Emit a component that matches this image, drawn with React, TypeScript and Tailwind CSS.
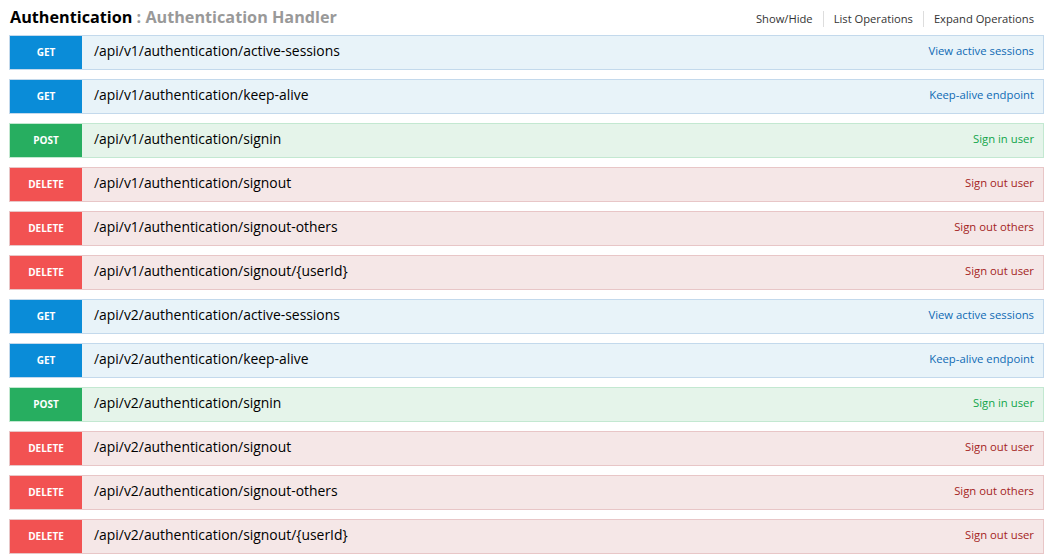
import React from "react";

type Op = {
  method: "GET" | "POST" | "DELETE";
  path: string;
  summary: string;
};

const ops: Op[] = [
  { method: "GET", path: "/api/v1/authentication/active-sessions", summary: "View active sessions" },
  { method: "GET", path: "/api/v1/authentication/keep-alive", summary: "Keep-alive endpoint" },
  { method: "POST", path: "/api/v1/authentication/signin", summary: "Sign in user" },
  { method: "DELETE", path: "/api/v1/authentication/signout", summary: "Sign out user" },
  { method: "DELETE", path: "/api/v1/authentication/signout-others", summary: "Sign out others" },
  { method: "DELETE", path: "/api/v1/authentication/signout/{userId}", summary: "Sign out user" },
  { method: "GET", path: "/api/v2/authentication/active-sessions", summary: "View active sessions" },
  { method: "GET", path: "/api/v2/authentication/keep-alive", summary: "Keep-alive endpoint" },
  { method: "POST", path: "/api/v2/authentication/signin", summary: "Sign in user" },
  { method: "DELETE", path: "/api/v2/authentication/signout", summary: "Sign out user" },
  { method: "DELETE", path: "/api/v2/authentication/signout-others", summary: "Sign out others" },
  { method: "DELETE", path: "/api/v2/authentication/signout/{userId}", summary: "Sign out user" },
];

const styles = {
  GET: {
    row: "bg-[#e8f3f9] border-[#c3d9ec]",
    badge: "bg-[#0a8cd8]",
    summary: "text-[#0f6ab4]",
  },
  POST: {
    row: "bg-[#e5f4ea] border-[#c3e8d1]",
    badge: "bg-[#27ae60]",
    summary: "text-[#10a54a]",
  },
  DELETE: {
    row: "bg-[#f5e7e7] border-[#e8c6c7]",
    badge: "bg-[#f25252]",
    summary: "text-[#a41e22]",
  },
};

function OperationRow({ op }: { op: Op }) {
  const s = styles[op.method];
  return (
    <li className={`flex h-[35px] items-stretch border ${s.row}`}>
      <span
        className={`flex w-[72px] shrink-0 items-center justify-center text-[10px] font-bold text-white ${s.badge}`}
      >
        {op.method}
      </span>
      <span className="flex flex-1 items-center pb-[3px] pl-3 text-[13.9px] text-black">
        {op.path}
      </span>
      <span className={`flex items-center pb-[2px] pr-[9px] text-[11.3px] ${s.summary}`}>
        {op.summary}
      </span>
    </li>
  );
}

export default function App() {
  return (
    <div
      className="min-h-screen bg-white pl-[9px] pr-[11px]"
      style={{ fontFamily: '"Open Sans", "Noto Sans", sans-serif' }}
    >
      <div className="flex h-[35px] items-center justify-between">
        <h2 className="pl-px text-[16.2px] font-bold text-black">
          Authentication
          <span className="text-[#999]"> : Authentication Handler</span>
        </h2>
        <ul className="flex items-center pr-[10px] pt-[2px] text-[11.2px] text-[#333]">
          <li className="border-r border-[#ddd] pr-[10px] leading-4">Show/Hide</li>
          <li className="border-r border-[#ddd] px-[10px] leading-4">List Operations</li>
          <li className="pl-[10px] leading-4">Expand Operations</li>
        </ul>
      </div>
      <ul className="flex flex-col gap-[9px]">
        {ops.map((op, i) => (
          <OperationRow key={i} op={op} />
        ))}
      </ul>
    </div>
  );
}
